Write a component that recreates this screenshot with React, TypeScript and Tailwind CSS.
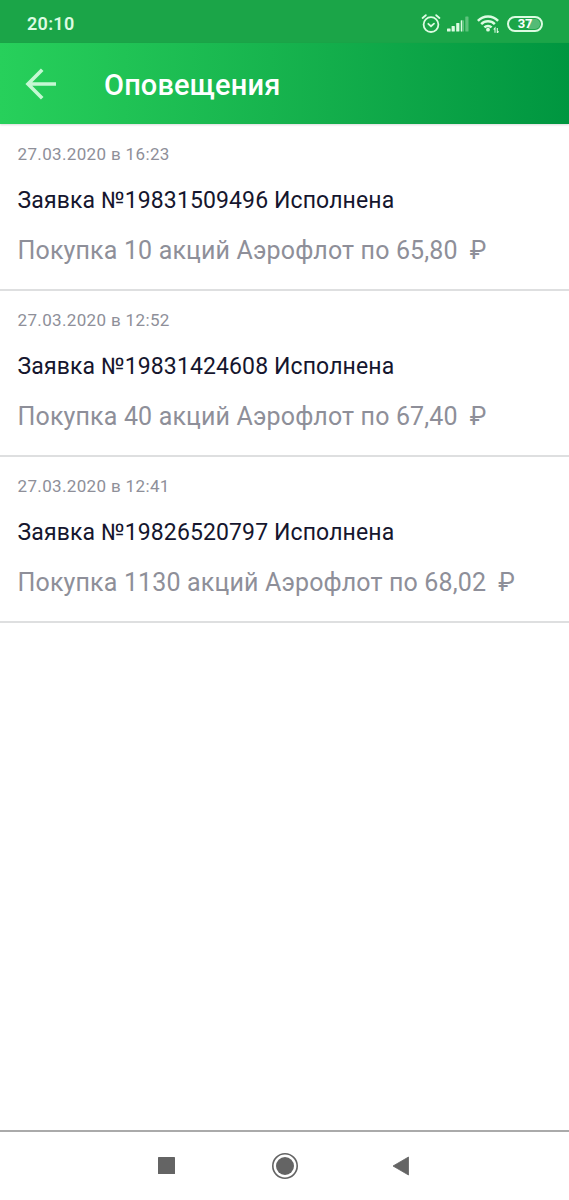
interface Notification {
  date: string;
  title: string;
  text: string;
}

const notifications: Notification[] = [
  {
    date: "27.03.2020 в 16:23",
    title: "Заявка №19831509496 Исполнена",
    text: "Покупка 10 акций Аэрофлот по 65,80",
  },
  {
    date: "27.03.2020 в 12:52",
    title: "Заявка №19831424608 Исполнена",
    text: "Покупка 40 акций Аэрофлот по 67,40",
  },
  {
    date: "27.03.2020 в 12:41",
    title: "Заявка №19826520797 Исполнена",
    text: "Покупка 1130 акций Аэрофлот по 68,02",
  },
];

const AlarmIcon = () => (
  <svg width="20" height="20" viewBox="0 0 20 20" fill="none" stroke="currentColor" strokeWidth="1.8" strokeLinecap="round">
    <circle cx="10" cy="10.6" r="7.4" />
    <path d="M7.3 9.8 10 12.2l3-2.6" />
    <path d="M1.6 4 4.8 1.2M18.4 4l-3.2-2.8" />
  </svg>
);

const SignalIcon = () => (
  <svg width="22" height="16" viewBox="0 0 22 16" fill="currentColor">
    <rect x="0" y="12.4" width="3.6" height="3.1" rx="0.6" />
    <rect x="4.6" y="10" width="3.2" height="5.5" rx="0.6" />
    <rect x="9.2" y="7" width="3.2" height="8.5" rx="0.6" />
    <rect x="13.8" y="4.2" width="3.2" height="11.3" rx="0.6" opacity="0.35" />
    <rect x="13.8" y="4.2" width="1.2" height="11.3" rx="0.6" />
    <rect x="18.3" y="0.5" width="3.2" height="15" rx="0.6" opacity="0.35" />
  </svg>
);

const WifiIcon = () => (
  <svg width="23" height="18" viewBox="0 0 23 18" fill="none" stroke="currentColor" strokeWidth="2.5">
    <path d="M0.9 5.8C6.5 0 15.5 0 21.1 5.8" />
    <path d="M4.2 9.2C8 5.4 14 5.4 17.8 9.2" />
    <path d="M7.4 12.4C9.4 10.4 12.6 10.4 14.6 12.4" />
    <circle cx="11" cy="14.7" r="1.9" fill="currentColor" stroke="none" />
    <path d="M18 17.8V13l-1.3 1.5M20.3 13v4.8l1.3-1.5" strokeWidth="1.1" />
  </svg>
);

const StatusBar = () => (
  <div className="flex h-[43px] items-center bg-[#1ba548] pt-1 text-[#dcfbe2]">
    <span className="ml-[27px] text-[18px] font-semibold leading-6 tracking-[0.3px]">
      20:10
    </span>
    <div className="mr-[26px] ml-auto flex items-center">
      <AlarmIcon />
      <span className="ml-[6px]">
        <SignalIcon />
      </span>
      <span className="ml-[8px]">
        <WifiIcon />
      </span>
      <span className="relative ml-[7px] flex h-4 w-9 items-center justify-center overflow-hidden rounded-full border-2 border-current text-[13px] font-bold leading-none tracking-[-0.3px]">
        <span className="absolute inset-y-[1px] right-[1px] w-3 rounded-r-full bg-white/25" />
        <span className="relative text-white">37</span>
      </span>
    </div>
  </div>
);

const Header = () => (
  <header className="flex h-[81px] items-center bg-linear-to-r from-[#27d05b] to-[#009640] text-white shadow-[0_1px_2px_rgba(0,0,0,0.15)]">
    <button className="ml-[25px] text-[#c5f8d3]" aria-label="Назад">
      <svg width="32" height="32" viewBox="0 0 32 32" fill="none" stroke="currentColor" strokeWidth="3.6">
        <path d="M31 16H3M17.2 1.8 3 16l14.2 14.2" />
      </svg>
    </button>
    <h1 className="ml-[47px] pt-0.5 text-[29px] font-medium leading-9 tracking-[0.15px]">
      Оповещения
    </h1>
  </header>
);

const NotificationRow = ({ item }: { item: Notification }) => (
  <li className="h-[166.2px] border-b-2 border-[#dedfe0] px-[17.5px] pt-[17.5px]">
    <p className="text-[17px] leading-6 tracking-[0.35px] text-[#8e8f99]">{item.date}</p>
    <h2 className="mt-[18.5px] text-[23px] leading-8 tracking-[0.12px] text-[#15162e]">
      {item.title}
    </h2>
    <p className="mt-[16.5px] text-[25px] leading-9 tracking-[0.15px] text-[#8e8f99]">
      {item.text}
      <span className="ml-3">₽</span>
    </p>
  </li>
);

const NavigationBar = () => (
  <nav className="flex h-[70px] items-center border-t-2 border-[#aaaaaa] pb-px text-[#646464]">
    <svg className="ml-[158px]" width="17" height="17" viewBox="0 0 17 17">
      <rect width="17" height="17" rx="0.6" fill="currentColor" />
    </svg>
    <svg className="ml-[97px]" width="26" height="26" viewBox="0 0 26 26">
      <circle cx="13" cy="13" r="12.2" fill="none" stroke="currentColor" strokeWidth="1.6" />
      <circle cx="13" cy="13" r="9" fill="currentColor" />
    </svg>
    <svg className="ml-[94px]" width="17" height="20" viewBox="0 0 17 20">
      <path d="M16.5 1v18L1 10z" fill="currentColor" stroke="currentColor" strokeWidth="0.8" strokeLinejoin="round" />
    </svg>
  </nav>
);

export default function App() {
  return (
    <div className="flex h-[1200px] w-[569px] flex-col overflow-hidden bg-white font-[Roboto,sans-serif]">
      <StatusBar />
      <Header />
      <main className="flex-1 pt-[0.6px]">
        <ul>
          {notifications.map((item) => (
            <NotificationRow key={item.title} item={item} />
          ))}
        </ul>
      </main>
      <NavigationBar />
    </div>
  );
}
